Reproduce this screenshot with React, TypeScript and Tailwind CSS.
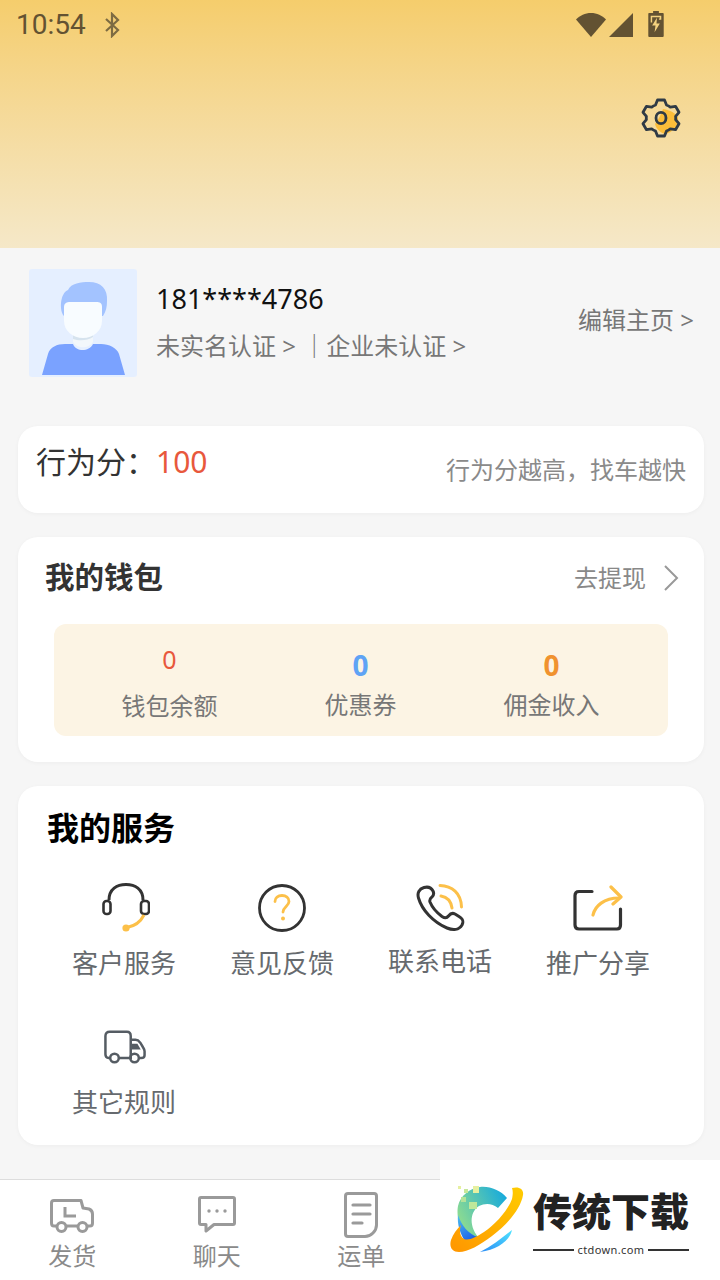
import React from "react";

const font = { fontFamily: '"Noto Sans", "Noto Sans CJK SC", sans-serif' };

function Avatar() {
  return (
    <svg width="108" height="108" viewBox="0 0 108 108" className="shrink-0">
      <rect width="108" height="108" rx="3" fill="#e5efff" />
      <path d="M35 47 C30 42 31 24 39 21 C42 14 52 13 60 13 C72 13 79 20 78 32 C78 38 77 42 74 47 Z" fill="#a3c3ff" />
      <path d="M13 106 L19 85 C21 78 28 75 36 75 L44 75 C47 83 60 83 64 75 L72 75 C80 75 88 79 90 85 L96 106 Z" fill="#7aa2ff" />
      <path d="M44 64 L64 64 L64 73 C60 80 48 80 44 73 Z" fill="#f2f7fb" />
      <path d="M44 64 L64 64 L64 68 C58 72 50 72 44 70 Z" fill="#d6e3ee" />
      <path d="M35 38 C35 34 38 33 41 33 L67 33 C71 33 73 34 73 38 L73 52 C73 62 64 69 54 69 C44 69 35 62 35 52 Z" fill="#f8fcff" />
    </svg>
  );
}

function Gear() {
  return (
    <svg width="40" height="40" viewBox="0 0 40 40" fill="none">
      <path d="M22 11 C29 12 35 15 37 20 C38 28 31 35 24 36 C18 34 15 30 14 26 C17 22 20 17 22 11Z" fill="#fbbd3a" />
      <path d="M16.500 3 L23.500 3 L25.500 8 C27 8.600 28 9.200 29.300 10.200 L34.500 9.300 L38 15.300 L34.600 19.400 C34.800 20.600 34.800 21.400 34.600 22.600 L38 26.700 L34.500 32.700 L29.300 31.800 C28 32.800 27 33.400 25.500 34 L23.500 39 L16.500 39 L14.500 34 C13 33.400 12 32.800 10.700 31.800 L5.500 32.700 L2 26.700 L5.400 22.600 C5.200 21.400 5.200 20.600 5.400 19.400 L2 15.300 L5.500 9.300 L10.700 10.200 C12 9.200 13 8.600 14.500 8 Z" stroke="#2f3a45" strokeWidth="2.800" strokeLinejoin="round" transform="translate(0 -1)" />
      <ellipse cx="20" cy="20" rx="5" ry="5.600" stroke="#2f3a45" strokeWidth="2.800" />
    </svg>
  );
}

function Headset() {
  return (
    <svg width="48" height="50" viewBox="0 0 48 50" fill="none" className="ml-[3px]">
      <path d="M7 17 C7 6 15 1.500 24 1.500 C33 1.500 41 6 41 17" stroke="#333" strokeWidth="3" />
      <rect x="1.500" y="18" width="7" height="13" rx="3" stroke="#333" strokeWidth="2.600" />
      <rect x="39" y="18" width="8" height="13" rx="3" stroke="#333" strokeWidth="2.600" />
      <path d="M42 32 C39 38 33 43 25 44.500" stroke="#fcc049" strokeWidth="3" />
      <circle cx="24" cy="45" r="3.600" fill="#fcc049" />
    </svg>
  );
}

function Help() {
  return (
    <svg width="48" height="48" viewBox="0 0 48 48" fill="none">
      <circle cx="24" cy="24" r="22.500" stroke="#333" strokeWidth="2.800" />
      <path d="M17 17.500 C17 13.500 20 11.500 24 11.500 C28 11.500 31 14 31 17.500 C31 22 25 23 25 28" stroke="#fcc049" strokeWidth="2.800" strokeLinecap="round" />
      <circle cx="25" cy="34.500" r="2" fill="#fcc049" />
    </svg>
  );
}

function Phone() {
  return (
    <svg width="50" height="48" viewBox="0 0 50 48" fill="none">
      <path d="M9 3.500 C4 5 2 9 3.500 14 C7 26 18 38 32 44 C38 46.500 44 46 47 41 C49 37 48 35 44 32.500 L40 30 C37 28.500 35 30 33.500 32 C32 34 30 34.500 27 32.500 C21 28 17 23 15 18 C14 15 16 14 17 13 C19 11 19 9 18 7 C16 3 13 2.500 9 3.500Z" stroke="#333" strokeWidth="3" strokeLinejoin="round" />
      <path d="M25 1.500 C37 2 46 9 46.500 23" stroke="#fcc049" strokeWidth="3" strokeLinecap="round" />
      <path d="M26 12 C32 13 36 17 37 24" stroke="#fcc049" strokeWidth="3" strokeLinecap="round" />
    </svg>
  );
}

function Share() {
  return (
    <svg width="50" height="46" viewBox="0 0 50 46" fill="none">
      <path d="M19 6.500 L6 6.500 C3.500 6.500 2 8 2 10.500 L2 40 C2 42.500 3.500 44 6 44 L44 44 C46.500 44 47.500 42.500 47.500 40 L47.500 24" stroke="#333" strokeWidth="3.200" strokeLinecap="round" />
      <path d="M20 30 C22 21 31 13 46 13" stroke="#fcc049" strokeWidth="3.200" strokeLinecap="round" />
      <path d="M38 2 L48 12 L40 19" stroke="#fcc049" strokeWidth="3.200" strokeLinecap="round" strokeLinejoin="round" />
    </svg>
  );
}

function Truck2() {
  return (
    <svg width="42" height="35" viewBox="0 0 44 36" fill="none" stroke="#555c63" strokeWidth="2.600" className="ml-[1px]">
      <path d="M7 29 L5 29 C2.500 29 1.500 27.500 1.500 25 L1.500 6 C1.500 3 3 1.500 6 1.500 L24 1.500 C27 1.500 28 3 28 6 L28 29 L15 29" />
      <path d="M28 10 L33 10 C35 10 36.500 11 38 13 L41 18 C42 19.500 42.500 21 42.500 22 L42.500 26 C42.500 28 41 29 39 29 L37 29" />
      <path d="M29 14 L35 14 L38.500 20 L29 20 Z" fill="#555c63" stroke="none" />
      <circle cx="11" cy="29" r="4.500" />
      <circle cx="32" cy="29" r="4.500" />
    </svg>
  );
}

function NavTruck() {
  return (
    <svg width="44" height="34" viewBox="0 0 44 34" fill="none" stroke="#9a9a9a" strokeWidth="3">
      <path d="M6 27 L4 27 C2.500 27 1.500 26 1.500 24 L1.500 4 C1.500 2.500 2.500 1.500 4 1.500 L31 1.500 L33 9 L39 10 C41.500 11 42.500 13 42.500 15 L42.500 24 C42.500 26 41.500 27 40 27 L38 27" strokeLinejoin="round" />
      <path d="M17 27 L27 27" />
      <path d="M15 8 L15 17 L26 17" />
      <circle cx="11.500" cy="28" r="4.500" />
      <circle cx="32.500" cy="28" r="4.500" />
    </svg>
  );
}

function NavChat() {
  return (
    <svg width="38" height="38" viewBox="0 0 38 38" fill="none">
      <path d="M3 1.500 L35 1.500 C36 1.500 36.500 2 36.500 3 L36.500 27 C36.500 28 36 28.500 35 28.500 L16 28.500 L8 35 L8 28.500 L3 28.500 C2 28.500 1.500 28 1.500 27 L1.500 3 C1.500 2 2 1.500 3 1.500Z" stroke="#9a9a9a" strokeWidth="3" strokeLinejoin="round" />
      <circle cx="11" cy="15" r="1.700" fill="#9a9a9a" />
      <circle cx="19" cy="15" r="1.700" fill="#9a9a9a" />
      <circle cx="27" cy="15" r="1.700" fill="#9a9a9a" />
    </svg>
  );
}

function NavDoc() {
  return (
    <svg width="34" height="46" viewBox="0 0 34 46" fill="none">
      <path d="M4 1.500 L30 1.500 C31.500 1.500 32.500 2.500 32.500 4 L32.500 33 C32.500 39 27 44.500 21 44.500 L4 44.500 C2.500 44.500 1.500 43.500 1.500 42 L1.500 4 C1.500 2.500 2.500 1.500 4 1.500Z" stroke="#9a9a9a" strokeWidth="3" strokeLinejoin="round" />
      <path d="M9 13 L26 13 M9 22 L26 22 M9 31 L18 31" stroke="#9a9a9a" strokeWidth="3.200" strokeLinecap="round" />
    </svg>
  );
}

function StatusIcons() {
  return (
    <div className="flex items-center">
      <svg width="30" height="24" viewBox="0 0 30 24" className="mr-[3px]">
        <path d="M15 24 L0 6.500 C4 2.500 9 0 15 0 C21 0 26 2.500 30 6.500 Z" fill="#635232" />
      </svg>
      <svg width="24" height="24" viewBox="0 0 24 24" className="mr-[15px]">
        <path d="M24 0 L24 24 L0 24 Z" fill="#635232" />
      </svg>
      <svg width="16" height="26" viewBox="0 0 16 27" className="mb-[2px]">
        <path d="M5 0 L11 0 L11 2 L15 2 C15.500 2 16 2.500 16 3 L16 26 C16 26.500 15.500 27 15 27 L1 27 C0.500 27 0 26.500 0 26 L0 3 C0 2.500 0.500 2 1 2 L5 2 Z" fill="#635232" />
        <path d="M9 7 L4 15 L7.500 15 L6.500 22 L12 13 L8.500 13 Z" fill="#f4d27f" />
        <path d="M2.500 5 L13.500 5 L13.500 9 L11 9 L12 6.500 L4 6.500 L4 12 L2.500 12 Z" fill="#f4d27f" />
      </svg>
    </div>
  );
}

function Logo() {
  return (
    <svg width="76" height="72" viewBox="0 0 76 72">
      <defs>
        <linearGradient id="ring" x1="0" y1="1" x2="1" y2="0">
          <stop offset="0" stopColor="#ff9500" />
          <stop offset="1" stopColor="#ffcc00" />
        </linearGradient>
        <linearGradient id="cee" x1="0" y1="0.600" x2="1" y2="0.100">
          <stop offset="0" stopColor="#8fdc8f" />
          <stop offset="1" stopColor="#11a8e0" />
        </linearGradient>
        <linearGradient id="blue" x1="0" y1="0" x2="0.500" y2="1">
          <stop offset="0" stopColor="#4fc0f0" />
          <stop offset="1" stopColor="#1b5fe8" />
        </linearGradient>
        <linearGradient id="sky" x1="1" y1="0" x2="0" y2="1">
          <stop offset="0" stopColor="#4fe3ff" />
          <stop offset="1" stopColor="#2b8cf5" />
        </linearGradient>
      </defs>
      <path d="M30 1 C40 0 50 4 57 12 L48 22 C42 17 35 17 29 20 C21 25 18 38 28 51 L22 55 C10 48 6 30 8 20 C10 10 20 2 30 1 Z" fill="url(#cee)" />
      <path d="M8 29 C12 40 18 48 28 51 L16 57 C10 48 7 38 8 29Z" fill="url(#blue)" />
      <path d="M62 2 C69 0 74 3 73 9 C71 22 58 38 42 50 C30 59 18 66 9 66 C2 66 -1 61 1 54 C3 48 7 43 11 39 C9 45 10 50 14 53 C19 55 26 51 34 46 C46 38 58 24 62 13 C63 8 63 5 62 2Z" fill="url(#ring)" />
      <path d="M62 44 C60 54 48 64 30 66 C42 60 52 52 62 44Z" fill="url(#sky)" />
      <rect x="8" y="0" width="3" height="3" fill="#e6f0a0" />
      <rect x="14" y="3" width="4" height="4" fill="#c6e89a" />
      <rect x="23" y="0" width="6" height="7" fill="#e6f0a0" />
      <rect x="11" y="11" width="5" height="5" fill="#b4e39a" />
      <rect x="19" y="16" width="8" height="7" fill="#bfe89a" />
    </svg>
  );
}

function ServiceItem({ icon, label }: { icon: React.ReactNode; label: string }) {
  return (
    <div className="flex flex-col items-center">
      <div className="h-[50px] flex items-center justify-center">{icon}</div>
      <div className="mt-[11px] text-[26px] leading-[38px] text-[#666a6e]">{label}</div>
    </div>
  );
}

function NavItem({ icon, label, iconClass }: { icon: React.ReactNode; label: string; iconClass: string }) {
  return (
    <div className="w-[144.5px] flex flex-col items-center">
      <div className={"h-[49px] flex items-end justify-center " + iconClass}>{icon}</div>
      <div className="mt-[1px] text-[24px] leading-[34px] text-[#8a8a8a]">{label}</div>
    </div>
  );
}

export default function App() {
  return (
    <div className="relative w-[720px] h-[1280px] overflow-hidden bg-[#f6f6f6] flex flex-col" style={font}>
      <header className="h-[248px] shrink-0 bg-gradient-to-b from-[#f5cd6c] to-[#f5e8c8] px-[16px] flex flex-col">
        <div className="h-[50px] flex items-center justify-between">
          <div className="flex items-center gap-[18px]">
            <span className="text-[28px] text-[#635232]" style={{ fontFamily: "Roboto, sans-serif" }}>10:54</span>
            <svg width="16" height="26" viewBox="0 0 16 26" fill="none" stroke="#7d6b42" strokeWidth="2.200">
              <path d="M2 7 L14 18 L8 24 L8 2 L14 8 L2 19" />
            </svg>
          </div>
          <div className="mr-[40px]"><StatusIcons /></div>
        </div>
        <div className="mt-[48px] self-end mr-[23px]"><Gear /></div>
      </header>

      <main className="flex-1 flex flex-col pl-[18px] pr-[16px]">
        <section className="mt-[21px] flex items-center pl-[11px] pr-[10px] h-[108px]">
          <Avatar />
          <div className="ml-[19px] flex-1 mb-[2px]">
            <div className="text-[27px] leading-[36px] text-[#111]">181****4786</div>
            <div className="mt-[12px] text-[24px] leading-[34px] text-[#777] whitespace-pre">未实名认证 &gt; ｜企业未认证 &gt;</div>
          </div>
          <div className="text-[24px] text-[#777] mb-[6px]">编辑主页 &gt;</div>
        </section>

        <section className="mt-[49px] h-[87px] rounded-[20px] bg-white shadow-[0_1px_4px_rgba(0,0,0,0.04)] flex justify-between pl-[18px] pr-[18px]">
          <div className="mt-[15px] text-[30px] leading-[42px] text-[#333]">
            行为分：<span className="text-[#e8583c]">100</span>
          </div>
          <div className="mt-[27px] text-[24px] leading-[34px] text-[#8a8a8a]">行为分越高，找车越快</div>
        </section>

        <section className="mt-[24px] h-[225px] rounded-[20px] bg-white shadow-[0_1px_4px_rgba(0,0,0,0.04)] px-[27px] flex flex-col">
          <div className="h-[87px] pb-[6px] flex items-center justify-between">
            <div className="text-[29.5px] font-bold text-[#333]">我的钱包</div>
            <div className="flex items-center text-[24px] text-[#888] mr-[-2px]">
              去提现
              <svg width="16" height="26" viewBox="0 0 16 26" fill="none" stroke="#999" strokeWidth="2" className="ml-[17px]">
                <path d="M2 1 L14 13 L2 25" />
              </svg>
            </div>
          </div>
          <div className="mx-[9px] h-[112px] rounded-[12px] bg-[#fcf4e4] flex">
            <div className="w-[191px] ml-[20px] flex flex-col items-center">
              <div className="mt-[17px] text-[25px] leading-[36px] text-[#e8583c]">0</div>
              <div className="mt-[12px] text-[24px] leading-[34px] text-[#777]">钱包余额</div>
            </div>
            <div className="w-[191px] flex flex-col items-center">
              <div className="mt-[23px] text-[28px] leading-[36px] font-bold text-[#5fa3f5]">0</div>
              <div className="mt-[5px] text-[24px] leading-[34px] text-[#777]">优惠券</div>
            </div>
            <div className="w-[191px] flex flex-col items-center">
              <div className="mt-[23px] text-[28px] leading-[36px] font-bold text-[#f0922f]">0</div>
              <div className="mt-[5px] text-[24px] leading-[34px] text-[#777]">佣金收入</div>
            </div>
          </div>
        </section>

        <section className="mt-[24px] h-[359px] rounded-[20px] bg-white shadow-[0_1px_4px_rgba(0,0,0,0.04)] pl-[27px] pr-[27px] flex flex-col">
          <div className="mt-[20px] pl-[2px] text-[32px] leading-[44px] font-bold text-black">我的服务</div>
          <div className="mt-[33px] grid grid-cols-4 gap-y-[40px]">
            <ServiceItem icon={<Headset />} label="客户服务" />
            <ServiceItem icon={<Help />} label="意见反馈" />
            <div className="flex flex-col items-center">
              <div className="h-[50px] flex items-center justify-center"><Phone /></div>
              <div className="mt-[9px] text-[26px] leading-[38px] text-[#666a6e]">联系电话</div>
            </div>
            <ServiceItem icon={<Share />} label="推广分享" />
            <ServiceItem icon={<Truck2 />} label="其它规则" />
          </div>
        </section>
      </main>

      <nav className="h-[101px] shrink-0 bg-white border-t border-[#dddddd] flex pt-[9px]">
        <NavItem icon={<NavTruck />} label="发货" iconClass="pb-[5px]" />
        <NavItem icon={<NavChat />} label="聊天" iconClass="pb-[4px]" />
        <NavItem icon={<NavDoc />} label="运单" iconClass="" />
      </nav>

      <div className="absolute left-[440px] top-[1160px] w-[280px] h-[120px] bg-white">
        <div className="absolute left-[10px] top-[26px]"><Logo /></div>
        <div className="absolute left-[93px] top-[16px] w-[160px] text-[39px] leading-[66px] font-black text-[#222] whitespace-nowrap" style={{ fontFamily: '"Noto Sans CJK SC", sans-serif' }}>传统下载</div>
        <div className="absolute left-[93px] top-[80px] w-[156px] flex items-center">
          <div className="flex-1 h-[2px] bg-[#333]" />
          <span className="px-[3px] text-[11px] leading-[20px] tracking-[0.4px] text-[#333]">ctdown.com</span>
          <div className="flex-1 h-[2px] bg-[#333]" />
        </div>
      </div>
    </div>
  );
}
